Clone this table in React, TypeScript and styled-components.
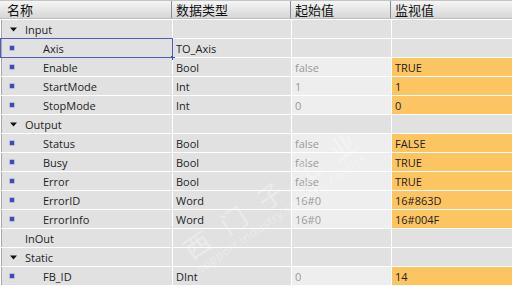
import React from "react";
import styled, { createGlobalStyle } from "styled-components";

const Global = createGlobalStyle`
  html, body { margin: 0; padding: 0; background: #ffffff; }
  body { font-family: "Open Sans", "Noto Sans", "Noto Sans CJK SC", sans-serif; }
`;

const Table = styled.div`
  position: relative;
  width: 512px;
  height: 286px;
  overflow: hidden;
  background: #ffffff;
`;

const COLS = "172px 118px 99px 1fr";

const HeaderRow = styled.div`
  display: grid;
  grid-template-columns: ${COLS};
  column-gap: 1px;
  height: 19px;
  border-top: 1px solid #c4c4c4;
  box-sizing: border-box;
  background: linear-gradient(#f6f6f6, #e6e6e6 50%, #d6d6d6);
  border-bottom: 1px solid #bdbdbd;
`;

const HeaderCell = styled.div<{ $first?: boolean }>`
  display: flex;
  align-items: center;
  padding-left: ${(p) => (p.$first ? "7px" : "3px")};
  font-family: "Noto Sans CJK SC", sans-serif;
  font-size: 13px;
  color: #111;
  border-right: 1px solid #8e8e8e;
  line-height: 1;
  &:last-child { border-right: none; }
`;

const Row = styled.div`
  display: grid;
  grid-template-columns: ${COLS};
  column-gap: 1px;
  height: 18px;
  margin-top: 1px;
`;

type Tone = "gray" | "light" | "orange";

const Cell = styled.div<{ $tone?: Tone; $muted?: boolean; $first?: boolean }>`
  position: relative;
  display: flex;
  align-items: center;
  box-sizing: border-box;
  padding-left: 3px;
  font-size: 11px;
  color: ${(p) => (p.$muted ? "#9a9a9a" : "#1e1e1e")};
  background: ${(p) =>
    p.$tone === "orange" ? "#fdc462" : p.$tone === "light" ? "#eeeeee" : "#e1e1e1"};
  ${(p) => (p.$first ? "border-left: 1px solid #a8a8a8; margin-left: 1px; padding-left: 0;" : "")}
  white-space: nowrap;
`;

const IconSlot = styled.span`
  width: 23px;
  flex: none;
  display: flex;
  align-items: center;
  padding-left: 8px;
  box-sizing: border-box;
`;

const Square = styled.span`
  width: 4px;
  height: 4px;
  background: #3b4db5;
  box-shadow: 0 0 0 0.5px #8b96d6;
`;

const Indent = styled.span<{ $leaf?: boolean }>`
  padding-left: ${(p) => (p.$leaf ? "18px" : "0")};
`;

const Selection = styled.span`
  position: absolute;
  inset: -1px -1px -1px -2px;
  border: 1px solid #4a5fc0;
  pointer-events: none;
  &::after {
    content: "";
    position: absolute;
    right: -3px;
    bottom: -3px;
    width: 4px;
    height: 4px;
    background: #3d52b8;
  }
`;

const Watermark = styled.div`
  position: absolute;
  left: 178px;
  top: 240px;
  transform: rotate(-34deg);
  transform-origin: left top;
  color: rgba(255, 255, 255, 0.35);
  pointer-events: none;
  line-height: 1.1;
`;

const WmBig = styled.div`
  font-family: "Noto Sans CJK SC", sans-serif;
  font-size: 26px;
  letter-spacing: 18px;
`;

const WmSmall = styled.div`
  font-family: "Open Sans", sans-serif;
  font-size: 12px;
  letter-spacing: 0.5px;
`;

const Tri = () => (
  <svg width="7" height="5" viewBox="0 0 7 5">
    <path d="M0 0.5 L7 0.5 L3.5 4.5 Z" fill="#111" />
  </svg>
);

type R = {
  name: string;
  kind: "group" | "leaf" | "plain";
  type?: string;
  start?: string;
  monitor?: string;
  selected?: boolean;
};

const rows: R[] = [
  { name: "Input", kind: "group" },
  { name: "Axis", kind: "leaf", type: "TO_Axis", selected: true },
  { name: "Enable", kind: "leaf", type: "Bool", start: "false", monitor: "TRUE" },
  { name: "StartMode", kind: "leaf", type: "Int", start: "1", monitor: "1" },
  { name: "StopMode", kind: "leaf", type: "Int", start: "0", monitor: "0" },
  { name: "Output", kind: "group" },
  { name: "Status", kind: "leaf", type: "Bool", start: "false", monitor: "FALSE" },
  { name: "Busy", kind: "leaf", type: "Bool", start: "false", monitor: "TRUE" },
  { name: "Error", kind: "leaf", type: "Bool", start: "false", monitor: "TRUE" },
  { name: "ErrorID", kind: "leaf", type: "Word", start: "16#0", monitor: "16#863D" },
  { name: "ErrorInfo", kind: "leaf", type: "Word", start: "16#0", monitor: "16#004F" },
  { name: "InOut", kind: "plain" },
  { name: "Static", kind: "group" },
  { name: "FB_ID", kind: "leaf", type: "DInt", start: "0", monitor: "14" },
];

export default function App() {
  return (
    <>
      <Global />
      <Table>
        <HeaderRow>
          <HeaderCell $first>名称</HeaderCell>
          <HeaderCell>数据类型</HeaderCell>
          <HeaderCell>起始值</HeaderCell>
          <HeaderCell>监视值</HeaderCell>
        </HeaderRow>
        {rows.map((r) => {
          const hasVal = r.start !== undefined;
          return (
            <Row key={r.name}>
              <Cell $first>
                <IconSlot>
                  {r.kind === "leaf" ? <Square /> : r.kind === "group" ? <Tri /> : null}
                </IconSlot>
                <Indent $leaf={r.kind === "leaf"}>{r.name}</Indent>
                {r.selected ? <Selection /> : null}
              </Cell>
              <Cell>{r.type ?? ""}</Cell>
              <Cell $tone={hasVal ? "light" : "gray"} $muted>
                {r.start ?? ""}
              </Cell>
              <Cell $tone={hasVal ? "orange" : "gray"}>{r.monitor ?? ""}</Cell>
            </Row>
          );
        })}
        <Watermark>
          <WmBig>西门子工业</WmBig>
          <WmSmall>support.industry.siemens.com/cs</WmSmall>
        </Watermark>
      </Table>
    </>
  );
}
